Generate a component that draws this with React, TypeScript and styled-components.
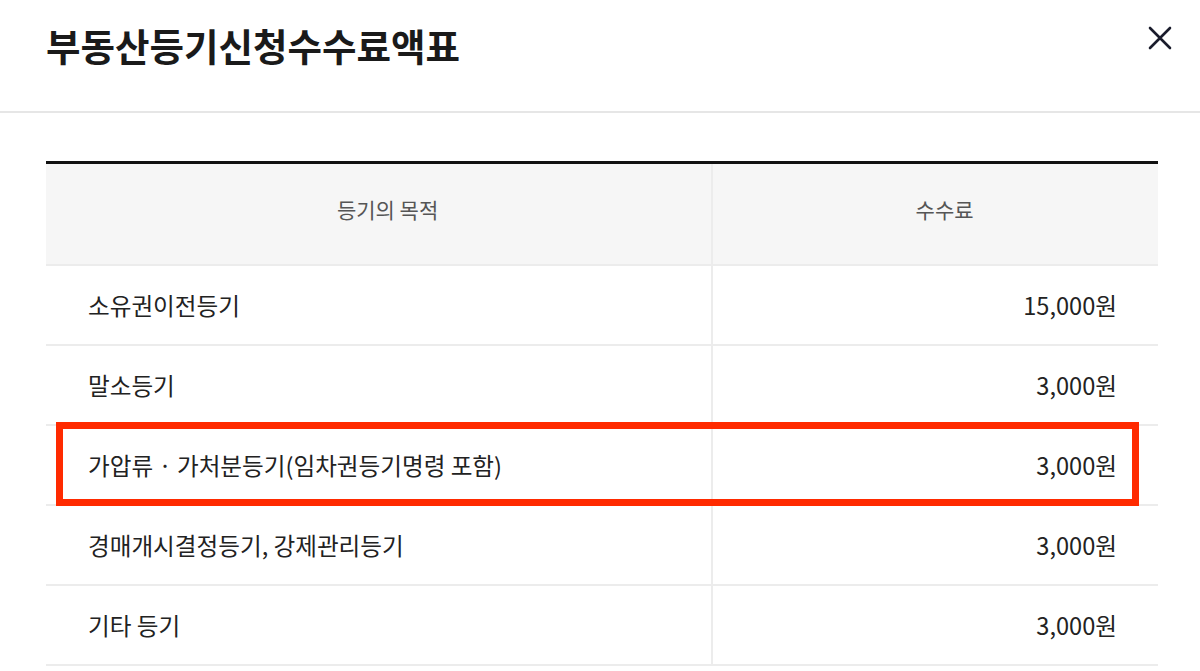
import React from "react";
import styled, { createGlobalStyle } from "styled-components";

const GlobalStyle = createGlobalStyle`
  html, body {
    margin: 0;
    padding: 0;
    background: #ffffff;
  }
  body {
    font-family: "Noto Sans CJK KR", "Noto Sans", sans-serif;
    color: #222222;
  }
`;

const Page = styled.div`
  width: 1200px;
  height: 671px;
  overflow: hidden;
  background: #ffffff;
`;

const Header = styled.header`
  height: 113px;
  display: flex;
  align-items: center;
  justify-content: space-between;
  padding: 0 25px 21px 46px;
  box-sizing: border-box;
  border-bottom: 2px solid #e6e6e6;
`;

const Title = styled.h1`
  margin: 0;
  font-size: 37.5px;
  font-weight: 700;
  color: #1a1a1a;
  letter-spacing: 0;
  line-height: 1;
`;

const CloseButton = styled.button`
  width: 30px;
  height: 30px;
  margin-bottom: 14px;
  padding: 0;
  border: none;
  background: transparent;
  display: flex;
  align-items: center;
  justify-content: center;
  cursor: pointer;
`;

const Body = styled.div`
  padding: 48px 42px 0 46px;
`;

const Table = styled.div`
  border-top: 3px solid #111111;
  display: grid;
  grid-template-columns: 60% 40%;
`;

const HeadCell = styled.div<{ $last?: boolean }>`
  height: 102px;
  box-sizing: border-box;
  background: #f6f6f6;
  border-bottom: 2px solid #ececec;
  border-right: ${(p) => (p.$last ? "none" : "2px solid #ececec")};
  display: flex;
  align-items: center;
  justify-content: center;
  padding: 0 0 10px 18px;
  font-size: 21px;
  color: #555555;
`;

const Row = styled.div`
  grid-column: 1 / -1;
  display: grid;
  grid-template-columns: 60% 40%;
  position: relative;
`;

const Cell = styled.div<{ $align?: "left" | "right"; $last?: boolean }>`
  height: 80px;
  box-sizing: border-box;
  border-bottom: 2px solid #ececec;
  border-right: ${(p) => (p.$last ? "none" : "2px solid #ececec")};
  display: flex;
  align-items: center;
  justify-content: ${(p) => (p.$align === "right" ? "flex-end" : "flex-start")};
  padding: ${(p) => (p.$align === "right" ? "0 41px 0 0" : "0 0 0 42px")};
  font-size: 23.6px;
  color: #222222;
`;

const Highlight = styled.div`
  position: absolute;
  left: 10px;
  right: 19px;
  top: -4px;
  bottom: 0;
  border: 7.5px solid #ff2a00;
  pointer-events: none;
`;

const rows = [
  { purpose: "소유권이전등기", fee: "15,000원" },
  { purpose: "말소등기", fee: "3,000원" },
  { purpose: "가압류 · 가처분등기(임차권등기명령 포함)", fee: "3,000원", highlight: true },
  { purpose: "경매개시결정등기, 강제관리등기", fee: "3,000원" },
  { purpose: "기타 등기", fee: "3,000원" },
];

export default function App() {
  return (
    <Page>
      <GlobalStyle />
      <Header>
        <Title>부동산등기신청수수료액표</Title>
        <CloseButton aria-label="닫기">
          <svg width="24" height="24" viewBox="0 0 24 24" fill="none">
            <path
              d="M2 2 L22 22 M22 2 L2 22"
              stroke="#1a1c2c"
              strokeWidth="2.6"
              strokeLinecap="round"
            />
          </svg>
        </CloseButton>
      </Header>
      <Body>
        <Table>
          <HeadCell>등기의 목적</HeadCell>
          <HeadCell $last>수수료</HeadCell>
          {rows.map((r) => (
            <Row key={r.purpose}>
              <Cell $align="left">{r.purpose}</Cell>
              <Cell $align="right" $last>
                {r.fee}
              </Cell>
              {r.highlight && <Highlight />}
            </Row>
          ))}
        </Table>
      </Body>
    </Page>
  );
}
